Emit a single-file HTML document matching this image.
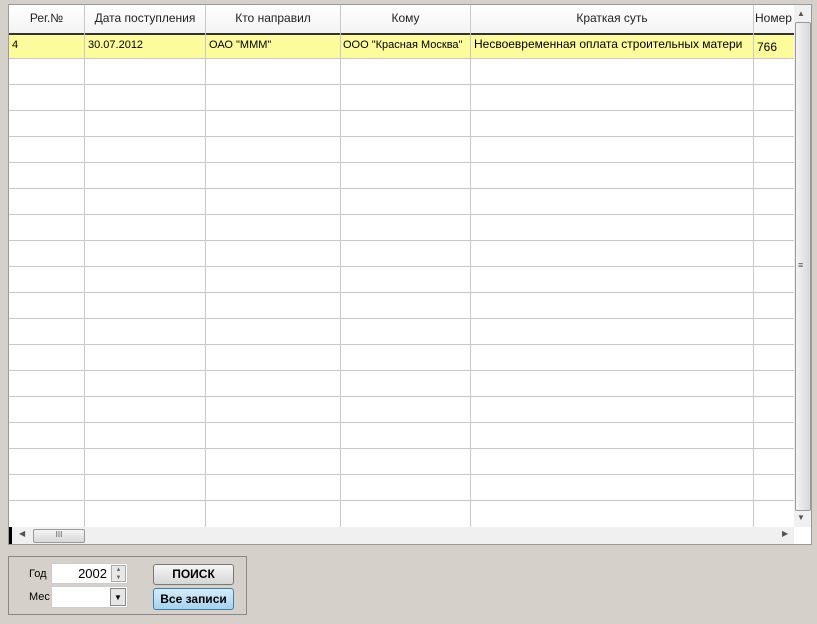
<!DOCTYPE html><html><head><meta charset="utf-8"><style>
body{margin:0;width:817px;height:624px;background:#d6d0ca;font-family:"Liberation Sans",sans-serif;position:relative;overflow:hidden}
.a{position:absolute}
.grid{left:8px;top:4px;width:802px;height:539px;background:#fff;border:1px solid #9a9a9a;overflow:hidden}
.hd{font-size:12px;color:#222;text-align:center;top:6px}
.vl{width:1px;background:#c8c8c8;top:0;height:522px}
.hl{height:1px;background:#c8c8c8;left:0;width:785px}
.c{font-size:11px;top:34px;color:#000}
</style></head><body>
<div class="a grid">
<div class="a" style="left:0;top:0;width:785px;height:28px;background:linear-gradient(#fff,#f3f3f3)"></div>
<div class="a" style="left:0;top:28px;width:785px;height:25px;background:#fcfc9c;border-top:2px solid #333;box-sizing:border-box"></div>
<div class="a vl" style="left:75px"></div><div class="a vl" style="left:196px"></div><div class="a vl" style="left:331px"></div><div class="a vl" style="left:461px"></div><div class="a vl" style="left:744px"></div>
<div class="a hd" style="left:0;width:75px">Рег.№</div>
<div class="a hd" style="left:76px;width:120px">Дата поступления</div>
<div class="a hd" style="left:197px;width:134px">Кто направил</div>
<div class="a hd" style="left:332px;width:129px">Кому</div>
<div class="a hd" style="left:462px;width:282px">Краткая суть</div>
<div class="a hd" style="left:745px;width:40px;text-align:left;padding-left:1px">Номер</div>
<div class="a c" style="left:3px">4</div>
<div class="a c" style="left:79px">30.07.2012</div>
<div class="a c" style="left:200px">ОАО "МММ"</div>
<div class="a c" style="left:334px">ООО "Красная Москва"</div>
<div class="a c" style="left:465px;font-size:12px;top:32px">Несвоевременная оплата строительных матери</div>
<div class="a c" style="left:748px;font-size:12px;top:35px">766</div>
<div class="a hl" style="top:53px"></div><div class="a hl" style="top:79px"></div><div class="a hl" style="top:105px"></div><div class="a hl" style="top:131px"></div><div class="a hl" style="top:157px"></div><div class="a hl" style="top:183px"></div><div class="a hl" style="top:209px"></div><div class="a hl" style="top:235px"></div><div class="a hl" style="top:261px"></div><div class="a hl" style="top:287px"></div><div class="a hl" style="top:313px"></div><div class="a hl" style="top:339px"></div><div class="a hl" style="top:365px"></div><div class="a hl" style="top:391px"></div><div class="a hl" style="top:417px"></div><div class="a hl" style="top:443px"></div><div class="a hl" style="top:469px"></div><div class="a hl" style="top:495px"></div>
<!-- vscroll -->
<div class="a" style="left:785px;top:0;width:17px;height:522px;background:#f0f0f0"></div>
<div class="a" style="left:788px;top:4px;font-size:8px;color:#555">▲</div>
<div class="a" style="left:786px;top:17px;width:14px;height:487px;background:linear-gradient(90deg,#f4f4f4,#d8d8d8);border:1px solid #999;border-radius:2px"></div>
<div class="a" style="left:789px;top:255px;font-size:9px;color:#555">≡</div>
<div class="a" style="left:788px;top:508px;font-size:8px;color:#555">▼</div>
<!-- hscroll -->
<div class="a" style="left:0;top:522px;width:785px;height:17px;background:#f0f0f0"></div>
<div class="a" style="left:0;top:522px;width:3px;height:17px;background:#000"></div>
<div class="a" style="left:10px;top:524px;font-size:8px;color:#555">◀</div>
<div class="a" style="left:24px;top:524px;width:50px;height:12px;background:linear-gradient(#f4f4f4,#d8d8d8);border:1px solid #999;border-radius:2px;font-size:8px;text-align:center;color:#555">III</div>
<div class="a" style="left:773px;top:524px;font-size:8px;color:#555">▶</div>
</div>
<!-- panel -->
<div class="a" style="left:8px;top:556px;width:239px;height:59px;border:1px solid #888;box-sizing:border-box"></div>
<div class="a" style="left:29px;top:568px;font-size:11px">Год</div>
<div class="a" style="left:29px;top:591px;font-size:11px">Мес</div>
<div class="a" style="left:51px;top:563px;width:77px;height:21px;background:#fff;border:1px solid #ccc;box-sizing:border-box"></div>
<div class="a" style="left:70px;top:566px;width:37px;text-align:right;font-size:13px">2002</div>
<div class="a" style="left:111px;top:565px;width:15px;height:17px;background:#e8e8e8;border:1px solid #aaa;box-sizing:border-box;font-size:6px;color:#666;text-align:center;line-height:8px">▲<br>▼</div>
<div class="a" style="left:51px;top:586px;width:77px;height:22px;background:#fff;border:1px solid #ccc;box-sizing:border-box"></div>
<div class="a" style="left:110px;top:588px;width:16px;height:18px;background:#e6e6e6;border:1px solid #888;box-sizing:border-box;font-size:8px;text-align:center;line-height:17px">▼</div>
<div class="a" style="left:153px;top:564px;width:81px;height:21px;background:linear-gradient(#f6f6f6,#d6d6d6);border:1px solid #777;border-radius:3px;box-sizing:border-box;font-size:12px;font-weight:bold;text-align:center;line-height:19px">ПОИСК</div>
<div class="a" style="left:153px;top:588px;width:81px;height:22px;background:linear-gradient(#d6ecf8,#a6d2ee);border:1px solid #3a7fb0;border-radius:3px;box-sizing:border-box;font-size:12px;font-weight:bold;text-align:center;line-height:20px">Все записи</div>
</body></html>
